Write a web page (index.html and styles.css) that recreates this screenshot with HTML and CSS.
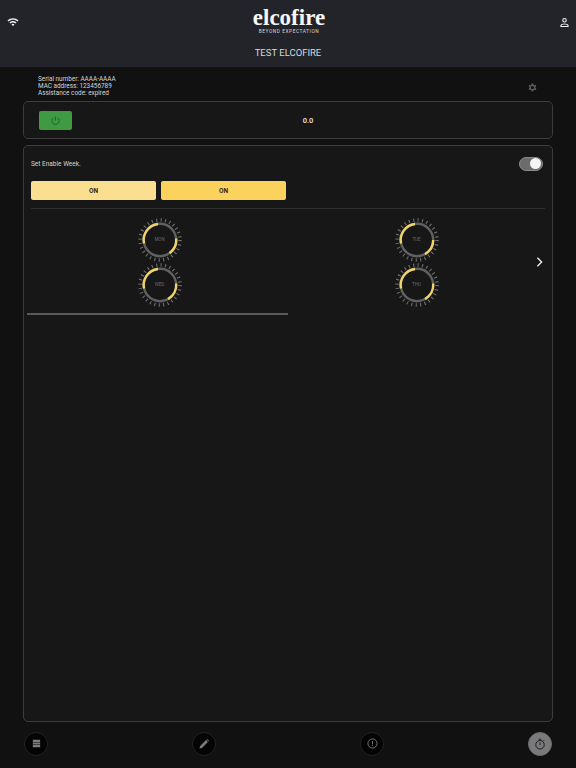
FILE: index.html
```html
<!DOCTYPE html>
<html lang="en">
<head>
    <meta charset="UTF-8">
    <meta name="viewport" content="width=device-width, initial-scale=1.0">
    <title>Elcofire</title>
    <link rel="stylesheet" href="styles.css">
</head>
<body>
    <svg class="defs" width="0" height="0">
        <symbol id="dial" viewBox="0 0 46 46">
            <circle class="dial-ticks" cx="23" cy="23" r="20"/>
            <circle class="dial-ring" cx="23" cy="23" r="16.2"/>
        </symbol>
    </svg>

    <header class="topbar">
        <div class="topbar-row">
            <svg class="icon-wifi" viewBox="0 0 24 24" width="12" height="12">
                <path d="M1 9l2 2c5-5 13-5 18 0l2-2C17 3 7 3 1 9zm4 4l2 2c3-3 7-3 10 0l2-2c-4-4-10-4-14 0zm4 4l3 3 3-3c-2-2-4-2-6 0z"/>
            </svg>
            <div class="logo">
                <div class="logo-name">elcofire</div>
                <div class="logo-sub">BEYOND EXPECTATION</div>
            </div>
            <svg class="icon-user" viewBox="0 0 24 24" width="11" height="11">
                <path d="M12 2a5 5 0 1 0 0 10 5 5 0 0 0 0-10zm0 2.400a2.600 2.600 0 1 1 0 5.200 2.600 2.600 0 0 1 0-5.200zM12 14c-4 0-9 1.600-9 4.500V22h18v-3.500C21 15.600 16 14 12 14zm0 2.400c3.200 0 6.200 1.200 6.600 2.200v1H5.400v-1c.4-1 3.400-2.200 6.600-2.200z"/>
            </svg>
        </div>
        <div class="topbar-title">TEST ELCOFIRE</div>
    </header>

    <main class="content">
        <section class="info">
            <div class="info-lines">
                <div>Serial number: AAAA-AAAA</div>
                <div>MAC address: 123456789</div>
                <div>Assistance code: expired</div>
            </div>
            <svg class="icon-gear" viewBox="0 0 24 24" width="11" height="11">
                <path d="M19.400 13a7.500 7.500 0 0 0 0-2l2.100-1.600-2-3.500-2.500 1a7.500 7.500 0 0 0-1.700-1L15 3.300h-4l-.4 2.600a7.500 7.500 0 0 0-1.700 1l-2.500-1-2 3.500L6.600 11a7.500 7.500 0 0 0 0 2l-2.100 1.600 2 3.500 2.500-1c.5.400 1.100.7 1.700 1l.3 2.600h4l.4-2.600c.6-.3 1.200-.6 1.700-1l2.500 1 2-3.500zM13 15.500a3.500 3.500 0 1 1 0-7 3.500 3.500 0 0 1 0 7z" transform="translate(-1 0)"/>
            </svg>
        </section>

        <section class="panel power-panel">
            <button class="power-btn">
                <svg viewBox="0 0 24 24" width="11" height="11">
                    <path d="M12 3v9M7 6.200a8 8 0 1 0 10 0"/>
                </svg>
            </button>
            <div class="power-value">0.0</div>
        </section>

        <section class="panel week-panel">
            <div class="week-head">
                <span>Set Enable Week.</span>
                <span class="switch"><span class="switch-knob"></span></span>
            </div>
            <div class="week-buttons">
                <button class="on-btn on-light">ON</button>
                <button class="on-btn on-dark">ON</button>
            </div>
            <div class="divider"></div>
            <div class="dials">
                <div class="dial">
                    <svg viewBox="0 0 46 46" width="46" height="46">
                        <use href="#dial"/>
                        <path class="dial-arc" d="M7 26.500A16.200 16.200 0 0 1 21 7M39.200 21.500A16.200 16.200 0 0 1 32.500 36.200"/>
                    </svg>
                    <span class="dial-label">MON</span>
                </div>
                <div class="dial">
                    <svg viewBox="0 0 46 46" width="46" height="46">
                        <use href="#dial"/>
                        <path class="dial-arc" d="M7 26.500A16.200 16.200 0 0 1 21 7M39.200 23A16.200 16.200 0 0 1 31 37.100"/>
                    </svg>
                    <span class="dial-label">TUE</span>
                </div>
                <div class="dial">
                    <svg viewBox="0 0 46 46" width="46" height="46">
                        <use href="#dial"/>
                        <path class="dial-arc" d="M7 26.500A16.200 16.200 0 0 1 21 7M39.200 21.500A16.200 16.200 0 0 1 31 37.100"/>
                    </svg>
                    <span class="dial-label">WED</span>
                </div>
                <div class="dial">
                    <svg viewBox="0 0 46 46" width="46" height="46">
                        <use href="#dial"/>
                        <path class="dial-arc" d="M7 26.500A16.200 16.200 0 0 1 21 7M39.200 21.500A16.200 16.200 0 0 1 31 37.100"/>
                    </svg>
                    <span class="dial-label">THU</span>
                </div>
                <svg class="chevron" viewBox="0 0 10 14" width="7" height="10">
                    <path d="M2 1l6 6-6 6"/>
                </svg>
            </div>
            <div class="scrollbar"></div>
        </section>
    </main>

    <nav class="bottombar">
        <button class="nav-btn">
            <svg viewBox="0 0 24 24" width="11" height="11" class="nav-fill">
                <path d="M4 4h16v4.500H4zM4 9.800h16v4.400H4zM4 15.500h16V20H4z"/>
            </svg>
        </button>
        <button class="nav-btn">
            <svg viewBox="0 0 24 24" width="12" height="12" class="nav-fill">
                <path d="M3 21l1.200-5L16 4.200l3.800 3.800L8 19.800zM17.200 3l1.300-1 3.500 3.500-1 1.300z"/>
            </svg>
        </button>
        <button class="nav-btn">
            <svg viewBox="0 0 24 24" width="11" height="11" class="nav-line">
                <circle cx="12" cy="12" r="10"/>
                <path d="M12 7v7M12 16v1.500"/>
            </svg>
        </button>
        <button class="nav-btn nav-active">
            <svg viewBox="0 0 24 24" width="12" height="12" class="nav-line">
                <circle cx="12" cy="13.500" r="8.500"/>
                <path d="M12 9v5M9.500 2.500h5M18.500 6l1.500-1.500"/>
            </svg>
        </button>
    </nav>
</body>
</html>
```

FILE: styles.css
```css
* {
    box-sizing: border-box;
}
body {
    margin: 0;
    width: 576px;
    height: 768px;
    overflow: hidden;
    display: flex;
    flex-direction: column;
    background-color: #111112;
    color: #e4e4e4;
    font-family: 'Roboto', sans-serif;
}
button {
    font-family: inherit;
    border: none;
    padding: 0;
}
.defs {
    position: absolute;
}

/* top bar */
.topbar {
    height: 67px;
    flex-shrink: 0;
    background-color: #23242a;
}
.topbar-row {
    height: 44px;
    padding: 0 6px 0 7px;
    display: flex;
    justify-content: space-between;
    align-items: center;
}
.icon-wifi, .icon-user {
    fill: #f0f0f0;
}
.logo {
    text-align: center;
    margin-top: -3px;
}
.logo-name {
    font-family: 'Liberation Serif', serif;
    font-weight: 700;
    font-size: 23px;
    line-height: 23px;
    color: #f6f6f6;
}
.logo-sub {
    font-size: 4.800px;
    line-height: 6px;
    letter-spacing: 0.55px;
    color: #d8d8d8;
}
.topbar-title {
    text-align: center;
    font-size: 9.500px;
    line-height: 17px;
    color: #d8d8d8;
}

.content {
    flex: 1;
    padding: 0 23px;
    display: flex;
    flex-direction: column;
}
.info {
    height: 34px;
    padding: 5px 14px 0 15px;
    display: flex;
    justify-content: space-between;
    align-items: center;
    font-size: 6.400px;
    line-height: 7.300px;
    color: #d4d4d4;
}
.icon-gear {
    fill: #5a5a5c;
    margin-right: 1px;
    margin-top: 2px;
}

.panel {
    background-color: #171718;
    border: 1px solid #3c3c3e;
    border-radius: 5px;
}
.power-panel {
    height: 38px;
    display: flex;
    align-items: center;
    padding-left: 15px;
}
.power-btn {
    width: 33px;
    height: 19px;
    background-color: #3f9a43;
    border-radius: 2px;
    display: flex;
    align-items: center;
    justify-content: center;
}
.power-btn path {
    fill: none;
    stroke: #1f5e25;
    stroke-width: 2;
}
.power-value {
    flex: 1;
    text-align: center;
    margin-right: 8px;
    font-size: 7.500px;
    font-weight: 500;
    color: #e8e8e8;
}

.week-panel {
    flex: 1;
    margin-top: 6px;
    padding: 0 7px;
    position: relative;
}
.week-head {
    height: 35px;
    display: flex;
    justify-content: space-between;
    align-items: center;
    font-size: 6.500px;
    color: #d4d4d4;
}
.switch {
    width: 24px;
    height: 14px;
    margin-right: 2px;
    border-radius: 7px;
    background-color: #6c6c6e;
    border: 1px solid #8a8a8c;
    display: flex;
    justify-content: flex-end;
    align-items: center;
    padding-right: 1px;
}
.switch-knob {
    width: 11px;
    height: 11px;
    border-radius: 50%;
    background-color: #f4f4f4;
}
.week-buttons {
    display: flex;
    gap: 5px;
}
.on-btn {
    width: 125px;
    height: 19px;
    border-radius: 2px;
    font-size: 6.500px;
    font-weight: 700;
    color: #2c2a1c;
}
.on-light {
    background-color: #fbdf90;
}
.on-dark {
    background-color: #fbd35c;
}
.divider {
    height: 1px;
    margin-top: 8px;
    background-color: #303032;
}
.dials {
    display: grid;
    grid-template-columns: 257px 257px;
    grid-auto-rows: 45px;
    padding-top: 8px;
    position: relative;
}
.dial {
    display: flex;
    align-items: center;
    justify-content: center;
    position: relative;
}
.dial-ticks {
    fill: none;
    stroke: #6e6e6e;
    stroke-width: 3.500;
    stroke-dasharray: 1.100 3.388;
}
.dial-ring {
    fill: #171718;
    stroke: #606061;
    stroke-width: 2.400;
}
.dial-arc {
    fill: none;
    stroke: #f0d468;
    stroke-width: 2.400;
}
.dial-label {
    position: absolute;
    font-size: 4.500px;
    color: #6a6a6c;
}
.chevron {
    position: absolute;
    right: 2px;
    top: 48px;
}
.chevron path {
    fill: none;
    stroke: #ececec;
    stroke-width: 2;
}
.scrollbar {
    width: 261px;
    height: 2px;
    margin: 6px 0 0 -4px;
    background-color: #5a5a5b;
}

/* bottom nav */
.bottombar {
    height: 46px;
    flex-shrink: 0;
    padding: 0 24px 3px;
    display: flex;
    justify-content: space-between;
    align-items: center;
}
.nav-btn {
    width: 24px;
    height: 24px;
    border-radius: 50%;
    background-color: #040404;
    border: 1px solid #232325;
    display: flex;
    align-items: center;
    justify-content: center;
}
.nav-fill {
    fill: #7c7c7c;
}
.nav-line {
    fill: none;
    stroke: #7c7c7c;
    stroke-width: 2;
}
.nav-active {
    background-color: #7a7a7c;
    border-color: #6a6a6c;
}
.nav-active .nav-line {
    stroke: #1a1a1a;
}
```
